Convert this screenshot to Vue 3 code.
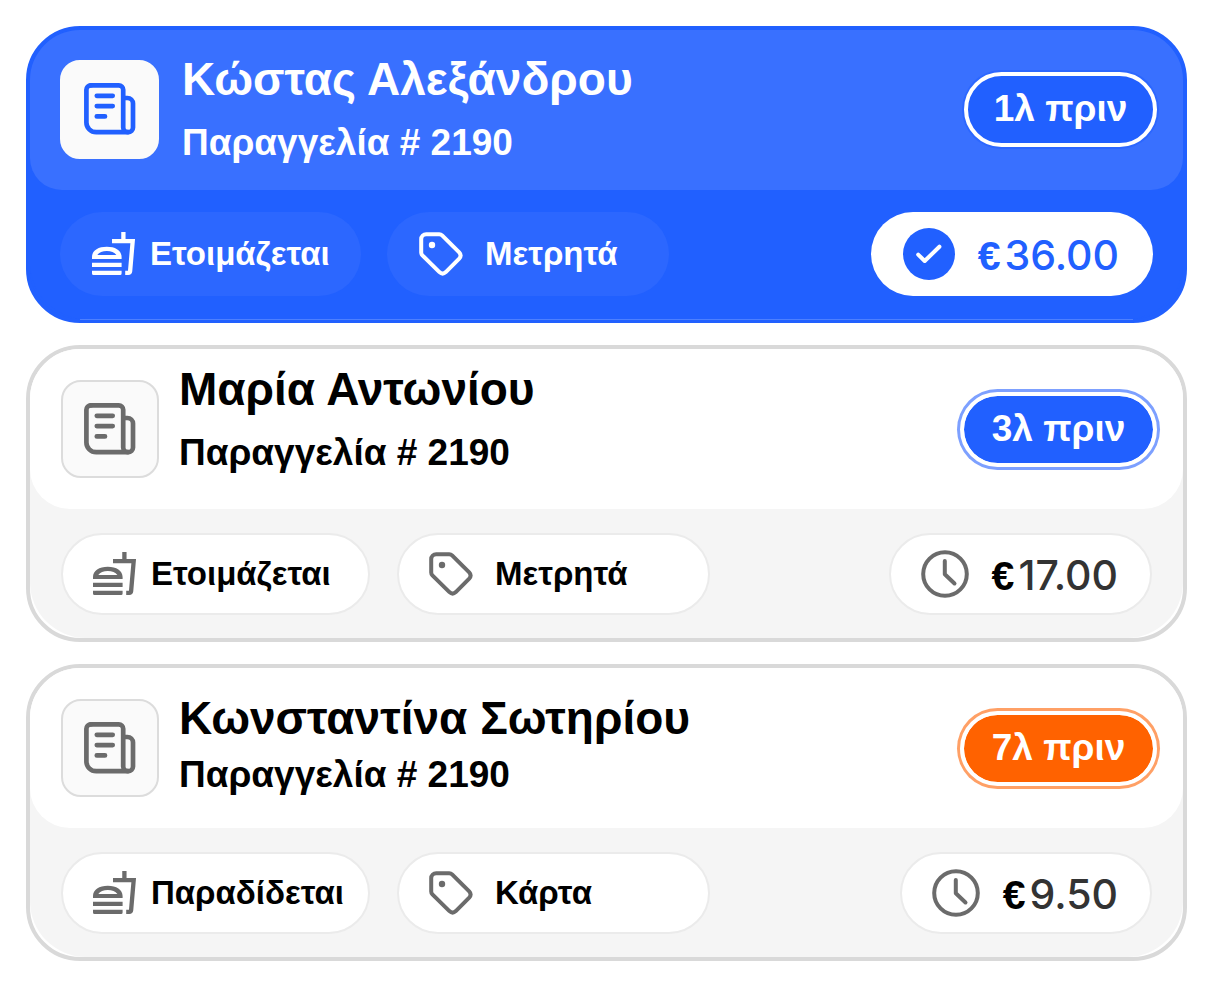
<script setup>
const orders = [
  {
    id: 1,
    name: 'Κώστας Αλεξάνδρου',
    number: '2190',
    age: '1λ πριν',
    status: 'Ετοιμάζεται',
    payment: 'Μετρητά',
    amount: '36.00',
    paid: true,
    kind: 'active',
  },
  {
    id: 2,
    name: 'Μαρία Αντωνίου',
    number: '2190',
    age: '3λ πριν',
    status: 'Ετοιμάζεται',
    payment: 'Μετρητά',
    amount: '17.00',
    paid: false,
    kind: 'waiting',
  },
  {
    id: 3,
    name: 'Κωνσταντίνα Σωτηρίου',
    number: '2190',
    age: '7λ πριν',
    status: 'Παραδίδεται',
    payment: 'Κάρτα',
    amount: '9.50',
    paid: false,
    kind: 'late',
  },
]
</script>

<template>
  <main class="orders">
    <article v-for="order in orders" :key="order.id" class="card" :class="`card--${order.kind}`">
      <div class="card__body">
        <header class="card__header">
          <div class="card__icon">
            <svg width="52" height="52" viewBox="0 0 52 52" fill="none" stroke="currentColor" stroke-width="4.7" stroke-linecap="round" stroke-linejoin="round" aria-hidden="true">
              <path d="M6.8 2.4H34.8a4.4 4.4 0 0 1 4.4 4.4V44.4a4.9 4.8 0 0 0 9.8 0V20.6a5.6 5.6 0 0 0-5.6-5.6H39.2" />
              <path d="M44 49.2H12.2a9.8 9.8 0 0 1-9.8-9.8V6.8a4.4 4.4 0 0 1 4.4-4.4" />
              <path d="M12.8 12.8H28.7M12.8 23.1H28.7M12.8 33.4H21" />
            </svg>
          </div>
          <div class="card__titles">
            <h2 class="card__name">{{ order.name }}</h2>
            <p class="card__order">Παραγγελία # {{ order.number }}</p>
          </div>
          <span class="badge">{{ order.age }}</span>
        </header>
        <footer class="card__footer">
          <span class="pill pill--status">
            <svg width="43" height="43" viewBox="0 0 43 43" fill="currentColor" aria-hidden="true">
              <path fill-rule="evenodd" d="M0 27V25C0 18.4 6.2 14.7 14.8 14.7S29.6 18.4 29.6 25V27ZM5.3 23H24.4C22.6 20.2 19 19 14.8 19S7.1 20.2 5.3 23Z" />
              <path d="M0 30.7H29.6V35H0ZM0 38.7H29.6V41.5Q29.6 43 28.1 43H1.5Q0 43 0 41.5Z" />
              <path d="M31.4 0V9M20 9.2H40.7L38.1 39.2Q37.9 40.8 36.3 40.8H33.2" fill="none" stroke="currentColor" stroke-width="4.3" />
            </svg>
            {{ order.status }}
          </span>
          <span class="pill pill--payment">
            <svg width="44" height="44" viewBox="0 0 44 44" fill="none" stroke="currentColor" stroke-width="4" aria-hidden="true">
              <path d="M2.2 7.2A5 5 0 0 1 7.2 2.2H20.3Q21.9 2.2 23.1 3.4L40.2 20.4Q43 23.5 40.2 26.6L26.8 40.1Q23.6 43 20.4 40.1L3.4 23.3Q2.2 22.1 2.2 20.5Z" />
              <circle cx="13" cy="13" r="3.2" fill="currentColor" stroke="none" />
            </svg>
            {{ order.payment }}
          </span>
          <span class="pill pill--price">
            <svg v-if="order.paid" width="52" height="52" viewBox="0 0 52 52" fill="none" aria-hidden="true">
              <circle cx="26" cy="26" r="26" fill="currentColor" />
              <path d="M15.2 26.6L21.7 33L36.4 18.7" stroke="#fff" stroke-width="4" stroke-linecap="round" stroke-linejoin="round" />
            </svg>
            <svg v-else width="48" height="48" viewBox="0 0 48 48" fill="none" stroke="currentColor" stroke-width="4" stroke-linecap="round" stroke-linejoin="round" aria-hidden="true">
              <circle cx="24" cy="24" r="21.8" />
              <path d="M23.8 11V24.3L33.5 33.5" />
            </svg>
            <span class="price"><span class="price__sign">€</span><span class="price__value">{{ order.amount }}</span></span>
          </span>
        </footer>
      </div>
    </article>
  </main>
</template>

<style>
body {
  margin: 0;
  background: #fff;
}
</style>

<style scoped>
.orders {
  display: flex;
  flex-direction: column;
  gap: 22px;
  padding: 26px;
  font-family: "Liberation Sans", Arial, sans-serif;
  font-weight: 700;
}

.card {
  --line: #d9d9d9;
  --header: #fff;
  --footer: #f5f5f5;
  --ink: #000;
  --icon: #6b6b6b;
  --accent: #2160ff;
  --title-top: 14px;
  --title-gap: 16px;
  --title-indent: 20px;
  position: relative;
  border: 4px solid var(--line);
  border-radius: 54px;
  background: #fff;
  color: var(--ink);
}

.card__body {
  border-radius: 50px 50px 56px 56px;
  background: var(--footer);
}

.card__header {
  display: flex;
  align-items: center;
  box-sizing: border-box;
  min-height: 160px;
  padding: 0 26px 0 31px;
  border-radius: 50px 50px 40px 40px;
  background: var(--header);
}

.card__icon {
  display: flex;
  align-items: center;
  justify-content: center;
  flex: none;
  box-sizing: border-box;
  width: 98px;
  height: 98px;
  border: 2px solid #dcdcdc;
  border-radius: 20px;
  background: #fafafa;
  color: var(--icon);
}

.card__titles {
  flex: 1;
  align-self: flex-start;
  padding-top: var(--title-top);
  padding-left: var(--title-indent);
}

.card__name {
  margin: 0 0 var(--title-gap);
  font-size: 46px;
  line-height: 52px;
}

.card__order {
  margin: 0;
  font-size: 37px;
  line-height: 44px;
}

.badge {
  display: flex;
  align-items: center;
  justify-content: center;
  flex: none;
  box-sizing: border-box;
  min-width: 197px;
  height: 75px;
  border: 4px solid #fff;
  border-radius: 38px;
  background: var(--accent);
  background-clip: padding-box;
  box-shadow: 0 0 0 3px var(--ring);
  color: #fff;
  font-size: 37px;
  line-height: 44px;
}

.card__footer {
  display: flex;
  align-items: center;
  gap: 27px;
  box-sizing: border-box;
  min-height: 129px;
  padding: 0 31px;
}

.pill {
  display: flex;
  align-items: center;
  box-sizing: border-box;
  height: 82px;
  padding: 0 30px;
  border: 2px solid #ebebeb;
  border-radius: 42px;
  background: #fff;
  font-size: 33px;
  line-height: 40px;
}

.pill svg {
  flex: none;
  color: var(--icon);
}

.pill--status {
  gap: 15px;
  min-width: 309px;
  padding-right: 24px;
}

.pill--payment {
  gap: 22px;
  min-width: 313px;
}

.pill--price {
  gap: 23px;
  margin-left: auto;
  padding-right: 32px;
}

.price {
  display: flex;
  align-items: baseline;
  gap: 4px;
  padding-top: 4px;
  font-size: 41px;
  line-height: 48px;
}

.price__value {
  color: #333;
  font-family: Inter, "Liberation Sans", sans-serif;
  font-weight: 500;
}

.card--active {
  --line: #2160ff;
  --header: #3970ff;
  --footer: #2160ff;
  --ink: #fff;
  --icon: #2160ff;
  --ring: #2c67ff;
  --title-top: 23px;
  --title-indent: 23px;
  background: #2160ff;
}

.card--active::after {
  content: "";
  position: absolute;
  right: 50px;
  bottom: -1px;
  left: 50px;
  height: 1px;
  background: #4d80ff;
}

.card--active .card__header {
  padding-bottom: 2px;
  padding-left: 30px;
  border-radius: 50px 50px 32px 32px;
}

.card--active .card__icon {
  width: 99px;
  height: 99px;
  border-color: #fafafa;
}

.card--active .badge {
  min-width: 193px;
  box-shadow: 0 0 0 2px var(--ring);
}

.card--active .card__footer {
  gap: 26px;
  padding: 0 30px 2px;
}

.card--active .pill {
  height: 84px;
  border-color: transparent;
  background: #2c67ff;
  background-clip: border-box;
}

.card--active .pill svg {
  color: #fff;
}

.card--active .pill--status {
  min-width: 301px;
}

.card--active .pill--payment {
  min-width: 282px;
}

.card--active .pill--price {
  background: #fff;
}

.card--active .pill--price svg,
.card--active .price,
.card--active .price__value {
  color: #2160ff;
}

.card--waiting {
  --ring: #7da0ff;
}

.card--late {
  --accent: #ff6200;
  --ring: #ffa066;
  --title-top: 24px;
  --title-gap: 9px;
}
</style>
